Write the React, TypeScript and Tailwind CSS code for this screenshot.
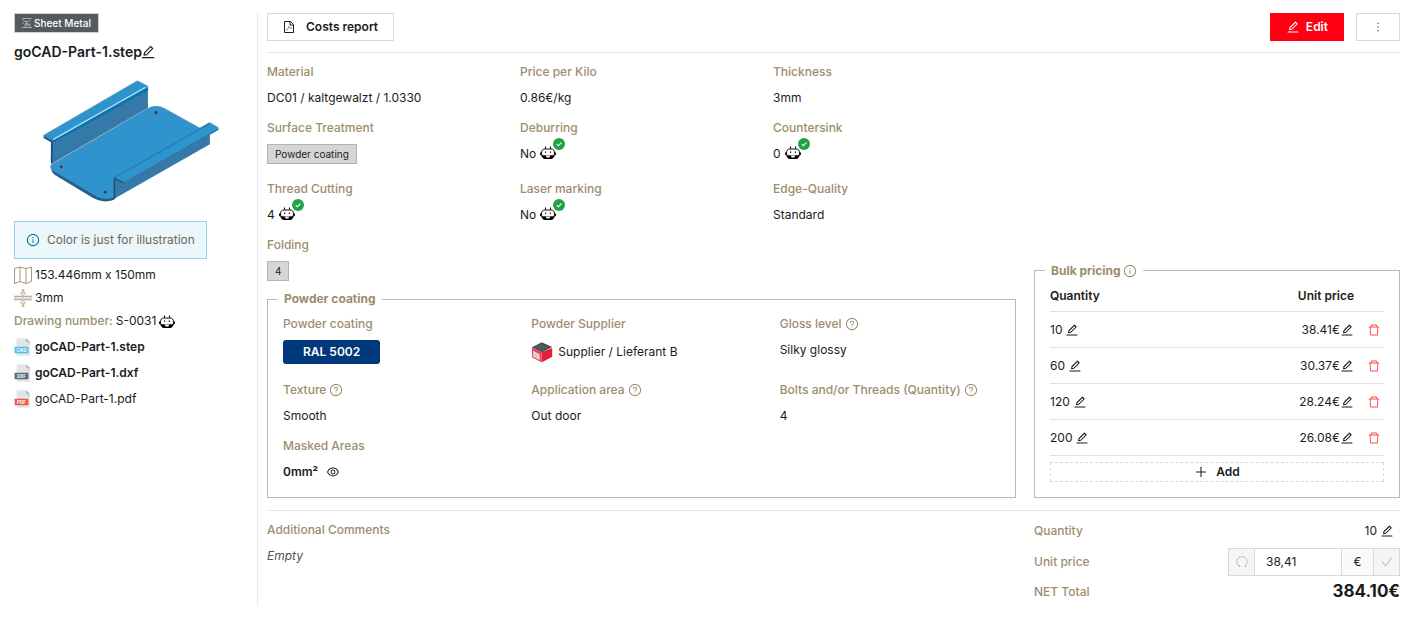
import type { ReactNode } from "react";
import {
  AiOutlineCheck,
  AiOutlineDelete,
  AiOutlineEdit,
  AiOutlineEye,
  AiOutlineInfoCircle,
  AiOutlineMore,
  AiOutlinePlus,
  AiOutlineQuestionCircle,
} from "react-icons/ai";

const bulkPrices = [
  { quantity: 10, price: "38.41€" },
  { quantity: 60, price: "30.37€" },
  { quantity: 120, price: "28.24€" },
  { quantity: 200, price: "26.08€" },
];

function Robot() {
  return (
    <svg viewBox="0 0 32 26" className="h-[13px] w-4 shrink-0 text-black" aria-hidden="true">
      <path d="M11 1v4M21 1v4" stroke="currentColor" strokeWidth="2.200" />
      <path d="M3 12v7c-2 0-3-1.500-3-3.500S1 12 3 12zM29 12v7c2 0 3-1.500 3-3.500S31 12 29 12z" fill="currentColor" />
      <path d="M10 6h12c5 0 7 3 7 8 0 7-3 11-8 11H11c-5 0-8-4-8-11 0-5 2-8 7-8z" fill="#fff" stroke="currentColor" strokeWidth="1.900" />
      <rect x="10" y="11" width="2.400" height="2.600" fill="currentColor" />
      <rect x="19.600" y="11" width="2.400" height="2.600" fill="currentColor" />
      <path d="M3 18.500h26c-1 4.500-4 7.500-8 7.500H11c-4 0-7-3-8-7.500z" fill="currentColor" />
      <path d="M11 19h10l-2.500 4h-5z" fill="#fff" />
    </svg>
  );
}

function CheckedRobot() {
  return (
    <span className="relative mb-1 inline-flex">
      <Robot />
      <svg viewBox="0 0 12 12" className="absolute -top-2 left-[13px] size-3" aria-hidden="true">
        <circle cx="6" cy="6" r="6" fill="#22a344" />
        <path d="M3.700 6.200l1.600 1.600L8.400 4.600" fill="none" stroke="#fff" strokeWidth="1.100" />
      </svg>
    </span>
  );
}

function SheetMetalIcon() {
  return (
    <svg viewBox="0 0 20 20" className="size-2.5" fill="none" stroke="#d5d9dc" strokeWidth="1.300" aria-hidden="true">
      <path d="M0 1h19M0 19h20M1 4l5 3h7l4-3M9 7v5M1 9l5 4 4-2 4 2 3-1M5 18l3-4h5l3 4" />
    </svg>
  );
}

function PartPreview() {
  return (
    <svg viewBox="130 238 528 368" className="h-[122px] w-[176px]" role="img" aria-label="Part preview">
      <path d="M154 492v18q2 9 12 15l110 67q34 20 67 7v-22z" fill="#1d5f8f" />
      <path d="M154 494L440 326q28-16 55-2l115 64-262 150-5 53q-32 12-61-7L162 513q-16-10-8-19z" fill="#2f93cd" stroke="#4d89ac" strokeWidth="2" />
      <path d="M154 419L445 258v64L157 490l-5-8z" fill="#3579a8" />
      <path d="M155 420v70" stroke="#164f78" strokeWidth="5" />
      <path d="M130 405L413 240l28 14q6 4 4 10L157 425l-24-12z" fill="#2f93cd" stroke="#7b98aa" strokeWidth="1.500" />
      <path d="M158 424L445 265" stroke="#0973ae" strokeWidth="8" />
      <path d="M160 417L438 260" stroke="#b7dcf6" strokeWidth="4" />
      <path d="M131 410l25 14" stroke="#164f78" strokeWidth="5" />
      <path d="M342 535v62l290-165v-38L372 550z" fill="#3579a8" />
      <path d="M342 531L631 366l26 15v7L375 549l-33-12z" fill="#2f93cd" stroke="#5c879f" strokeWidth="1.500" />
      <path d="M344 533L630 370" stroke="#1780bc" strokeWidth="4" />
      <path d="M374 548L657 387" stroke="#2b6e98" strokeWidth="3" />
      <path d="M344 597v-62l30 14" fill="none" stroke="#174f78" strokeWidth="4" />
      {[[470, 336], [184, 500], [316, 576]].map(([x, y]) => (
        <g key={x}>
          <ellipse cx={x} cy={y} rx="9" ry="7" fill="#5790b0" />
          <ellipse cx={x} cy={y} rx="5" ry="5" fill="#154a70" />
        </g>
      ))}
    </svg>
  );
}

function MapIcon() {
  return (
    <svg viewBox="0 0 36 36" className="size-[18px]" fill="none" stroke="#9c8d6d" strokeWidth="1.800" aria-hidden="true">
      <path d="M1 5l11-3 12 3 11-3v29l-11 4-12-4-11 4zM12 2v29M24 5v30" strokeLinejoin="round" />
    </svg>
  );
}

function ThicknessIcon() {
  return (
    <svg viewBox="0 0 36 36" className="size-[18px]" fill="none" stroke="#a4957a" strokeWidth="1.800" aria-hidden="true">
      <path d="M0 14.500h36M0 21.500h36" />
      <path d="M1 21l4-6M6 21l4-6M11 21l4-6M16 21l4-6M21 21l4-6M26 21l4-6M31 21l4-6" strokeWidth="1.500" />
      <path d="M16.500 1h3v7h3.500l-5 5-5-5h3.500zM16.500 35h3v-7h3.500l-5-5-5 5h3.500z" strokeWidth="1.500" />
    </svg>
  );
}

function FileIcon({ kind }: { kind: "cad" | "dxf" | "pdf" }) {
  const fill = { cad: "#50bee8", dxf: "#556b7d", pdf: "#f15642" }[kind];
  return (
    <svg viewBox="-2 0 49 54" className="h-[18px] w-4" aria-hidden="true">
      <path d="M9 0h26l12 12v38q0 4-4 4H9q-3 0-3-4V4q0-4 3-4z" fill="#e2e5e7" />
      <path d="M35 0l12 12H38q-3 0-3-3z" fill="#b0b7bd" />
      <path d="M38 12l9 9v-9z" fill="#cad1d8" />
      <rect x="0" y="26" width="42" height="20" rx="2" fill={fill} />
      <text x="21" y="41" textAnchor="middle" fill="#fff" fontSize="14" fontWeight="700" className="font-['Inter',sans-serif]">
        {kind.toUpperCase()}
      </text>
    </svg>
  );
}

function SupplierIcon() {
  return (
    <svg viewBox="0 0 66 64" className="h-[21px] w-[22px] shrink-0" aria-hidden="true">
      <path d="M32 32l32-14v27L33 62z" fill="#e21f36" />
      <path d="M1 17L32 1l32 14-32 18z" fill="#4d4d52" />
      <path d="M9 18l23 12M17 13l24 12M25 8l24 12" stroke="#77777c" strokeWidth="2" />
      <path d="M2 18l30 15v29L3 47z" fill="#f4354a" />
      <path d="M6 27l20 10v18L6 46z" fill="#e6dfe0" />
      <path d="M7 33l18 9M7 39l18 9M14 31v18" stroke="#c5b8ba" strokeWidth="2" />
    </svg>
  );
}

function Field({
  label,
  help,
  tall,
  children,
  className = "pb-2.5",
}: {
  label: string;
  help?: boolean;
  tall?: boolean;
  children?: ReactNode;
  className?: string;
}) {
  return (
    <div className={className}>
      <dt className="flex h-5 items-center gap-[3px] font-medium text-[#9c8d6d]">
        {label}
        {help && <AiOutlineQuestionCircle className="size-3.5" />}
      </dt>
      <dd className={tall ? "mt-1.5 flex h-6 items-center gap-[5px]" : "mt-1.5 flex h-5 items-center gap-1"}>{children}</dd>
    </div>
  );
}

function Tag({ children }: { children: ReactNode }) {
  return <span className="border border-[#b3b3b3] bg-[#d6d6d6] px-[7px] text-[10px] leading-[18px]">{children}</span>;
}

function Sidebar() {
  return (
    <aside className="flex w-[243px] shrink-0 flex-col items-start">
      <span className="flex h-5 items-center gap-0.5 border border-[#cfd2d4] bg-[#545b60] px-[7px] text-[10px] font-medium text-white">
        <SheetMetalIcon />
        Sheet Metal
      </span>
      <h1 className="mt-2 flex items-center text-[14px] leading-[22px] font-semibold">
        goCAD-Part-1.step
        <button type="button" aria-label="Rename part" className="-ml-0.5">
          <AiOutlineEdit className="size-4" />
        </button>
      </h1>
      <div className="mt-[17px] ml-[29px]">
        <PartPreview />
      </div>
      <div role="note" className="mt-[19px] flex h-[38px] items-center gap-[7px] border border-[#8ed5ee] bg-[#eaf7fc] px-[11px] text-[#6f654f]">
        <AiOutlineInfoCircle className="size-3.5 text-[#0b6b94]" />
        Color is just for illustration
      </div>
      <p className="mt-[5px] flex h-[22px] items-center gap-[3px]">
        <MapIcon />
        153.446mm x 150mm
      </p>
      <p className="mt-px flex h-[22px] items-center gap-[3px]">
        <ThicknessIcon />
        3mm
      </p>
      <p className="mt-px flex h-[22px] items-center gap-[3px]">
        <span className="font-medium text-[#9c8d6d]">Drawing number:</span>
        <span>S-0031</span>
        <Robot />
      </p>
      <ul className="mt-0.5">
        <li>
          <a href="#step" className="flex h-[26px] items-center gap-[5px] font-semibold">
            <FileIcon kind="cad" />
            goCAD-Part-1.step
          </a>
        </li>
        <li>
          <a href="#dxf" className="flex h-[26px] items-center gap-[5px] font-semibold">
            <FileIcon kind="dxf" />
            goCAD-Part-1.dxf
          </a>
        </li>
        <li>
          <a href="#pdf" className="flex h-[26px] items-center gap-[5px]">
            <FileIcon kind="pdf" />
            goCAD-Part-1.pdf
          </a>
        </li>
      </ul>
    </aside>
  );
}

function Toolbar() {
  return (
    <header className="flex items-center gap-3 border-b border-[#e8e8e8] pb-[11px] font-semibold">
      <button type="button" className="flex h-7 items-center gap-[11px] border border-[#d9d9d9] px-[15px]">
        <svg viewBox="0 0 24 24" className="size-3" fill="none" stroke="currentColor" strokeWidth="2" aria-hidden="true">
          <path d="M3 1h12l6 6v16H3zM14 1v7h7" />
          <path d="M6 18c4-2 6-4 6-7 2 4 4 4 6 2" stroke="#6a6a6a" strokeWidth="2" />
        </svg>
        Costs report
      </button>
      <button type="button" className="ml-auto flex h-7 items-center gap-[6px] bg-[#ff0013] px-4 text-white">
        <AiOutlineEdit className="size-3.5" />
        Edit
      </button>
      <button type="button" aria-label="More actions" className="flex h-7 w-11 items-center justify-center border border-[#d9d9d9] text-[#595959]">
        <AiOutlineMore className="size-3.5" />
      </button>
    </header>
  );
}

function Details() {
  return (
    <dl className="grid grid-cols-3 gap-x-2.5">
      <Field label="Material">DC01 / kaltgewalzt / 1.0330</Field>
      <Field label="Price per Kilo">0.86€/kg</Field>
      <Field label="Thickness">3mm</Field>
      <Field label="Surface Treatment" className="pb-[15px]">
        <Tag>Powder coating</Tag>
      </Field>
      <Field label="Deburring">
        No <CheckedRobot />
      </Field>
      <Field label="Countersink">
        0 <CheckedRobot />
      </Field>
      <Field label="Thread Cutting">
        4 <CheckedRobot />
      </Field>
      <Field label="Laser marking">
        No <CheckedRobot />
      </Field>
      <Field label="Edge-Quality">Standard</Field>
      <Field label="Folding" className="pb-2">
        <Tag>4</Tag>
      </Field>
    </dl>
  );
}

function PowderCoating() {
  return (
    <fieldset className="border border-[#b8b8b8] px-2.5 pb-[15px]">
      <legend className="px-1.5 leading-5 font-bold text-[#9c8d6d]">Powder coating</legend>
      <dl className="grid grid-cols-3 gap-x-7 px-[5px] pt-[5px]">
        <Field label="Powder coating" tall className="pb-4">
          <span className="rounded-[3px] bg-[#00387b] px-5 leading-6 font-semibold text-white">RAL 5002</span>
        </Field>
        <Field label="Powder Supplier" tall>
          <SupplierIcon /> Supplier / Lieferant B
        </Field>
        <Field label="Gloss level" help>
          Silky glossy
        </Field>
        <Field label="Texture" help>
          Smooth
        </Field>
        <Field label="Application area" help>
          Out door
        </Field>
        <Field label="Bolts and/or Threads (Quantity)" help>
          4
        </Field>
        <Field label="Masked Areas" className="pb-0">
          <button type="button" className="flex items-center gap-2 font-semibold">
            0mm²
            <AiOutlineEye className="size-3.5" />
          </button>
        </Field>
      </dl>
    </fieldset>
  );
}

function BulkPricing() {
  return (
    <fieldset className="w-[366px] shrink-0 border border-[#b8b8b8] px-2.5 pb-[15px]">
      <legend className="px-1.5 font-bold text-[#9c8d6d]">
        <span className="flex h-5 items-center gap-0.5">
          Bulk pricing
          <AiOutlineInfoCircle className="size-3.5" />
        </span>
      </legend>
      <div className="px-[5px]">
        <table className="w-full">
          <thead>
            <tr className="h-[31px] border-b border-[#dfe1e5]">
              <th className="text-left font-semibold">Quantity</th>
              <th className="text-right font-semibold">Unit price</th>
              <th className="w-[30px]" aria-label="Delete" />
            </tr>
          </thead>
          <tbody>
            {bulkPrices.map(({ quantity, price }) => (
              <tr key={quantity} className="h-9 border-b border-[#dfe1e5]">
                <td>
                  <span className="flex items-center gap-[3px]">
                    {quantity}
                    <button type="button" aria-label={`Edit quantity ${quantity}`}>
                      <AiOutlineEdit className="size-3.5" />
                    </button>
                  </span>
                </td>
                <td>
                  <span className="flex items-center justify-end">
                    {price}
                    <button type="button" aria-label={`Edit price for ${quantity}`}>
                      <AiOutlineEdit className="size-3.5" />
                    </button>
                  </span>
                </td>
                <td>
                  <button type="button" aria-label={`Delete quantity ${quantity}`} className="mr-[3px] ml-auto block text-[#ff4d4f]">
                    <AiOutlineDelete className="size-3.5" />
                  </button>
                </td>
              </tr>
            ))}
          </tbody>
        </table>
        <button type="button" className="mt-1.5 flex h-5 w-full items-center justify-center gap-2 border border-dashed border-[#d9d9d9] font-semibold">
          <AiOutlinePlus className="size-3.5" />
          Add
        </button>
      </div>
    </fieldset>
  );
}

function Totals() {
  return (
    <div className="w-[366px] shrink-0">
      <div className="flex h-[22px] items-center justify-between">
        <span className="font-medium text-[#9c8d6d]">Quantity</span>
        <span className="flex items-center gap-[3px] pr-1.5">
          10
          <button type="button" aria-label="Edit quantity">
            <AiOutlineEdit className="size-3.5" />
          </button>
        </span>
      </div>
      <div className="mt-1.5 flex h-7 items-center justify-between">
        <label htmlFor="unit-price" className="font-medium text-[#9c8d6d]">
          Unit price
        </label>
        <div className="flex h-7 w-[172px] border border-[#d9d9d9]">
          <button type="button" disabled aria-label="Reset price" className="flex w-[26px] shrink-0 items-center justify-center border-r border-[#d9d9d9] bg-[#f5f5f5] text-[#bfbfbf]">
            <svg viewBox="0 0 24 24" className="size-3" fill="none" stroke="currentColor" strokeWidth="2" aria-hidden="true">
              <path d="M7 21A10.500 10.500 0 1 1 17 21M7 22v-4M17 21h4" />
            </svg>
          </button>
          <input id="unit-price" type="text" defaultValue="38,41" className="min-w-0 flex-1 px-[11px] outline-none" />
          <span className="flex w-8 shrink-0 items-center justify-center border-l border-[#d9d9d9] bg-[#fafafa]">€</span>
          <button type="button" disabled aria-label="Apply price" className="flex w-[26px] shrink-0 items-center justify-center border-l border-[#d9d9d9] bg-[#f5f5f5] text-[#bfbfbf]">
            <AiOutlineCheck className="size-3.5" />
          </button>
        </div>
      </div>
      <div className="mt-0.5 flex h-7 items-center justify-between">
        <span className="font-medium text-[#9c8d6d]">NET Total</span>
        <strong className="text-[17px] font-bold">384.10€</strong>
      </div>
    </div>
  );
}

export default function App() {
  return (
    <div className="flex bg-white px-3.5 pt-[13px] font-['Inter',sans-serif] text-[12px] text-[#1b1b1b]">
      <Sidebar />
      <main className="min-w-0 flex-1 border-l border-[#e8e8e8] pl-[9px]">
        <Toolbar />
        <div className="flex items-end gap-[18px] pt-[9px]">
          <div className="min-w-0 flex-1">
            <Details />
            <PowderCoating />
          </div>
          <BulkPricing />
        </div>
        <footer className="mt-3 flex gap-[18px] border-t border-[#e8e8e8] pt-[9px]">
          <dl className="flex-1">
            <Field label="Additional Comments">
              <span className="text-[#555555] italic">Empty</span>
            </Field>
          </dl>
          <Totals />
        </footer>
      </main>
    </div>
  );
}
